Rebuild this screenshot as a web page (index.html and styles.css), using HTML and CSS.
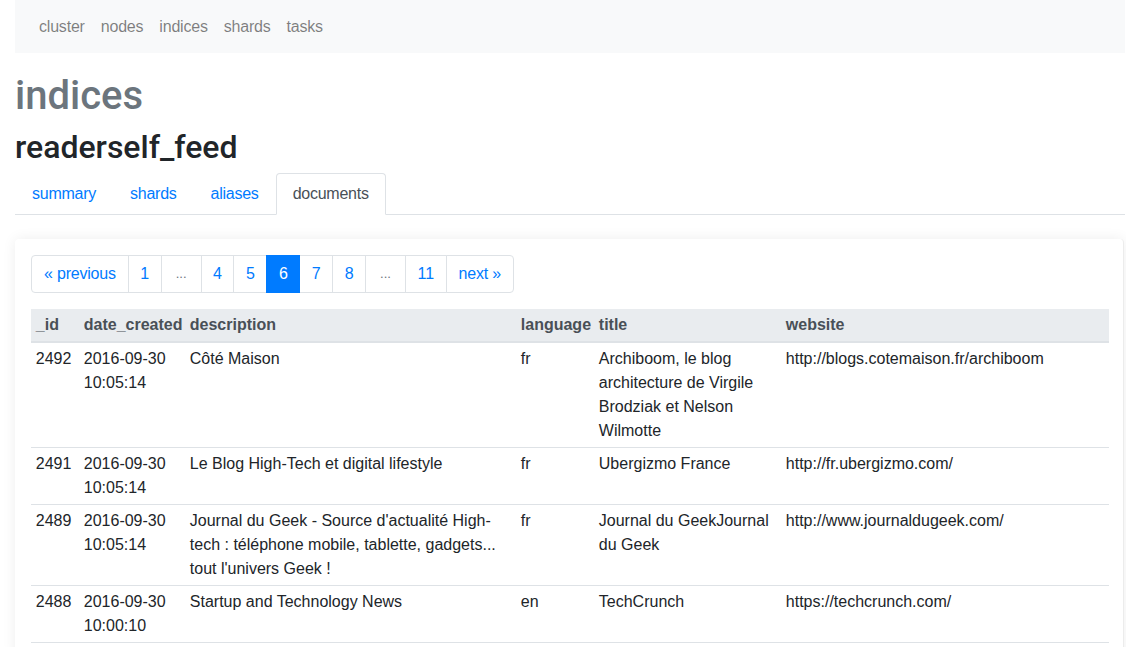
FILE: index.html
```html
<!DOCTYPE html>
<html lang="en">
<head>
<meta charset="utf-8">
<title>indices - readerself_feed</title>
<link rel="stylesheet" href="styles.css">
</head>
<body>
<nav class="navbar">
  <a class="nav-item" href="#">cluster</a>
  <a class="nav-item" href="#">nodes</a>
  <a class="nav-item" href="#">indices</a>
  <a class="nav-item" href="#">shards</a>
  <a class="nav-item" href="#">tasks</a>
</nav>
<main class="container">
  <h1 class="page-title">indices</h1>
  <h2 class="index-name">readerself_feed</h2>
  <ul class="tabs">
    <li><a class="tab" href="#">summary</a></li>
    <li><a class="tab" href="#">shards</a></li>
    <li><a class="tab" href="#">aliases</a></li>
    <li><a class="tab active" href="#">documents</a></li>
  </ul>
  <section class="card">
    <ul class="pagination">
      <li><a class="page-link wide" href="#">« previous</a></li>
      <li><a class="page-link" href="#">1</a></li>
      <li><span class="page-link disabled">...</span></li>
      <li><a class="page-link" href="#">4</a></li>
      <li><a class="page-link" href="#">5</a></li>
      <li><span class="page-link current">6</span></li>
      <li><a class="page-link" href="#">7</a></li>
      <li><a class="page-link" href="#">8</a></li>
      <li><span class="page-link disabled">...</span></li>
      <li><a class="page-link" href="#">11</a></li>
      <li><a class="page-link wide" href="#">next »</a></li>
    </ul>
    <table class="docs">
      <colgroup>
        <col class="c-id"><col class="c-date"><col class="c-desc"><col class="c-lang"><col class="c-title"><col class="c-web">
      </colgroup>
      <thead>
        <tr><th>_id</th><th>date_created</th><th>description</th><th>language</th><th>title</th><th>website</th></tr>
      </thead>
      <tbody>
        <tr><td>2492</td><td>2016-09-30 10:05:14</td><td>Côté Maison</td><td>fr</td><td>Archiboom, le blog architecture de Virgile Brodziak et Nelson Wilmotte</td><td>http://blogs.cotemaison.fr/archiboom</td></tr>
        <tr><td>2491</td><td>2016-09-30 10:05:14</td><td>Le Blog High-Tech et digital lifestyle</td><td>fr</td><td>Ubergizmo France</td><td>http://fr.ubergizmo.com/</td></tr>
        <tr><td>2489</td><td>2016-09-30 10:05:14</td><td>Journal du Geek - Source d'actualité High-tech : téléphone mobile, tablette, gadgets... tout l'univers Geek !</td><td>fr</td><td>Journal du GeekJournal du Geek</td><td>http://www.journaldugeek.com/</td></tr>
        <tr><td>2488</td><td>2016-09-30 10:00:10</td><td>Startup and Technology News</td><td>en</td><td>TechCrunch</td><td>https://techcrunch.com/</td></tr>
      </tbody>
    </table>
  </section>
</main>
</body>
</html>
```

FILE: styles.css
```css
* { box-sizing: border-box; }

html, body {
  margin: 0;
  padding: 0;
  background: #fff;
}

body {
  font-family: "Liberation Sans", Arial, sans-serif;
  font-size: 16px;
  line-height: 1.5;
  color: #212529;
  overflow: hidden;
}

a { text-decoration: none; }

.navbar {
  display: flex;
  align-items: center;
  margin: 0 0 0 15px;
  width: 1110px;
  height: 53px;
  padding: 0 16px;
  background: #f8f9fa;
}

.nav-item {
  padding: 8px;
  color: rgba(0, 0, 0, 0.5);
  letter-spacing: -0.2px;
}

.container {
  margin-left: 15px;
  width: 1110px;
}

.page-title {
  margin: 19px 0 8px;
  font-size: 40px;
  line-height: 1.2;
  font-weight: 500;
  font-family: Roboto, "Liberation Sans", sans-serif;
  color: #6c757d;
}

.index-name {
  margin: 0 0 7px;
  font-size: 32px;
  line-height: 1.2;
  font-weight: 500;
  font-family: Roboto, "Liberation Sans", sans-serif;
  color: #212529;
}

.tabs {
  display: flex;
  list-style: none;
  margin: 0;
  padding: 0;
  border-bottom: 1px solid #dee2e6;
}

.tabs li { margin-bottom: -1px; }

.tab {
  display: block;
  padding: 8px 16px;
  border: 1px solid transparent;
  border-top-left-radius: 4px;
  border-top-right-radius: 4px;
  color: #007bff;
  letter-spacing: -0.25px;
}

.tab.active {
  color: #495057;
  background: #fff;
  border-color: #dee2e6 #dee2e6 #fff;
}

.card {
  margin-top: 24px;
  width: 1109px;
  padding: 16px;
  background: #fff;
  border-radius: 4px;
  border-right: 1px solid #ececec;
  box-shadow: 0 0 14px rgba(0, 0, 0, 0.07);
}

.pagination {
  display: flex;
  list-style: none;
  margin: 0 0 16px;
  padding: 0;
}

.page-link {
  display: block;
  padding: 8px 11.5px;
  margin-left: -1px;
  line-height: 20px;
  border: 1px solid #dee2e6;
  color: #007bff;
  background: #fff;
}

.page-link.wide {
  padding: 8px 12px;
  letter-spacing: -0.2px;
}

.pagination li:first-child .page-link {
  margin-left: 0;
  border-top-left-radius: 4px;
  border-bottom-left-radius: 4px;
}

.pagination li:last-child .page-link {
  border-top-right-radius: 4px;
  border-bottom-right-radius: 4px;
}

.page-link.disabled {
  color: #6c757d;
  font-size: 13px;
  line-height: 20px;
  padding: 8px 14px;
}

.page-link.current {
  position: relative;
  z-index: 1;
  color: #fff;
  background: #007bff;
  border-color: #007bff;
}

.docs {
  width: 1078px;
  table-layout: fixed;
  border-collapse: collapse;
}

.c-id { width: 48px; }
.c-date { width: 106px; }
.c-desc { width: 331px; }
.c-lang { width: 78px; }
.c-title { width: 187px; }
.c-web { width: 328px; }

.docs th,
.docs td {
  padding: 4px 4.8px;
  text-align: left;
  vertical-align: top;
}

.docs thead th {
  background: #e9ecef;
  color: #495057;
  font-weight: bold;
  white-space: nowrap;
  border-bottom: 2px solid #dee2e6;
}

.docs td {
  border-top: 1px solid #dee2e6;
}

.docs tbody tr:last-child td {
  border-bottom: 1px solid #dee2e6;
}
```
